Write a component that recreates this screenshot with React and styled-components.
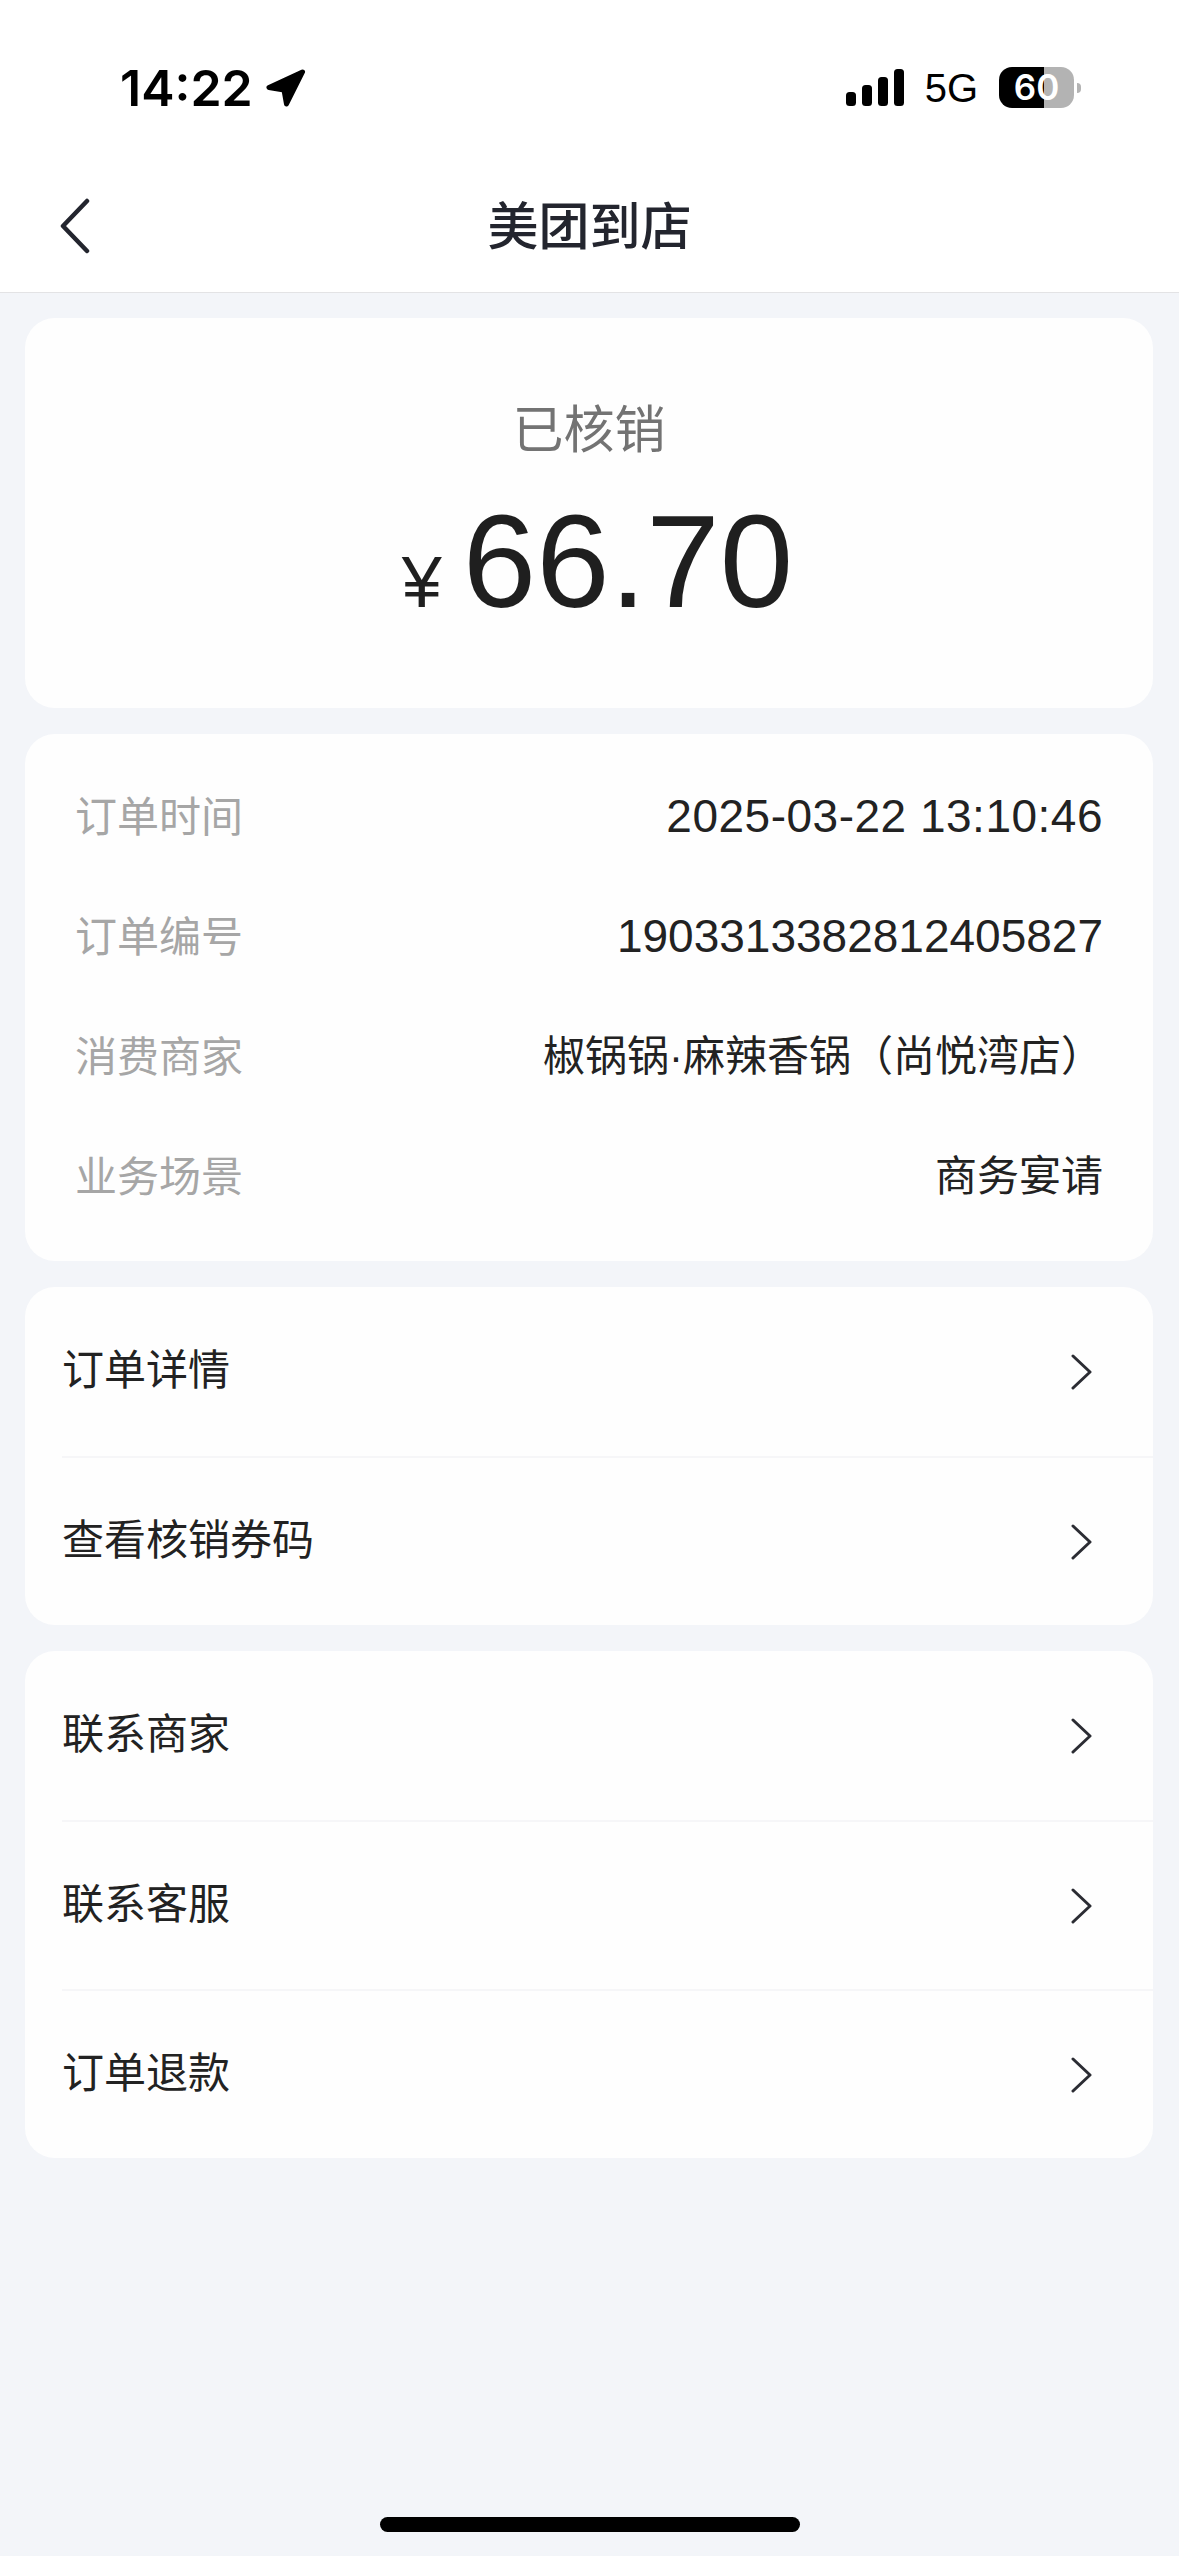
import React from 'react';
import styled, { createGlobalStyle } from 'styled-components';

const CJK = '"Noto Sans CJK SC", sans-serif';
const LATIN = '"Liberation Sans", "Noto Sans CJK SC", sans-serif';

const GlobalStyle = createGlobalStyle`
  html, body {
    margin: 0;
    padding: 0;
    background: #f3f5f9;
  }
  * {
    box-sizing: border-box;
  }
`;

const Page = styled.div`
  display: flex;
  flex-direction: column;
  width: 1179px;
  height: 2556px;
  overflow: hidden;
  background: #f3f5f9;
  font-family: ${CJK};
`;

const Header = styled.header`
  background: #fff;
  border-bottom: 1px solid #e3e3e5;
`;

const StatusBar = styled.div`
  display: flex;
  align-items: center;
  justify-content: space-between;
  height: 177px;
  padding: 0 105px 2px 120px;
`;

const StatusGroup = styled.div`
  display: flex;
  align-items: center;
  gap: ${props => props.$gap}px;
`;

const Clock = styled.span`
  font: 600 50px/1 Inter, ${LATIN};
  color: #000;
`;

const Network = styled.span`
  font: 400 40px/1 ${LATIN};
  color: #000;
`;

const Battery = styled.div`
  position: relative;
  display: flex;
  align-items: center;
  justify-content: center;
  width: 75px;
  height: 41px;
  border-radius: 13px;
  color: #fff;
  font: 600 35px/1 Inter, ${LATIN};

  &::after {
    content: '';
    position: absolute;
    top: 16px;
    right: -7px;
    width: 4px;
    height: 10px;
    border-radius: 0 5px 5px 0;
    background: #b3b3b3;
  }
`;

const NavBar = styled.nav`
  position: relative;
  display: flex;
  align-items: center;
  justify-content: center;
  height: 115px;
  padding-bottom: 22px;
`;

const BackButton = styled.svg`
  position: absolute;
  left: 59px;
  top: 21px;
`;

const Title = styled.h1`
  margin: 0;
  font: 500 51px/1.2 ${CJK};
  color: #23252e;
`;

const Content = styled.main`
  display: flex;
  flex-direction: column;
  gap: 26px;
  padding: 25px 26px 0 25px;
`;

const Card = styled.section`
  border-radius: 30px;
  background: #fefefe;
`;

const SummaryCard = styled(Card)`
  display: flex;
  flex-direction: column;
  align-items: center;
  height: 390px;
  padding-top: 74px;
`;

const Status = styled.div`
  font: 400 51px/68px ${CJK};
  color: #737373;
`;

const Amount = styled.div`
  display: flex;
  align-items: baseline;
  gap: 21px;
  margin: 32px 0 0 17px;
  color: #1f1f1f;
  font-family: ${LATIN};
`;

const Currency = styled.span`
  font-size: 72px;
  line-height: 1;
`;

const Price = styled.span`
  font-size: 132px;
  line-height: 140px;
`;

const InfoCard = styled(Card)`
  padding: 23px 50px 24px 50px;
`;

const InfoRow = styled.div`
  display: flex;
  align-items: center;
  justify-content: space-between;
  height: 120px;
`;

const InfoLabel = styled.span`
  padding-bottom: 6px;
  font: 400 42px/1.2 ${CJK};
  color: #a6a6a6;
`;

const InfoValue = styled.span`
  font-family: ${LATIN};
  font-size: ${props => (props.$numeric ? 46 : 42)}px;
  letter-spacing: ${props => props.$tracking || 0}px;
  line-height: 1.2;
  color: #222;
`;

const MenuRow = styled.div`
  display: flex;
  align-items: center;
  justify-content: space-between;
  height: 169px;
  margin-left: 37px;
  padding-right: 60px;
  border-top: ${props => (props.$first ? 'none' : '2px solid #f6f6f8')};
`;

const MenuLabel = styled.span`
  padding-bottom: 8px;
  font: 400 42px/1.2 ${CJK};
  color: #222;
`;

const HomeBar = styled.div`
  align-self: center;
  width: 420px;
  height: 15px;
  margin-top: auto;
  margin-bottom: 24px;
  border-radius: 8px;
  background: #000;
`;

const SignalIcon = () => (
  <svg width="58" height="37" viewBox="0 0 58 37" fill="#000">
    <rect x="0" y="23" width="10" height="14" rx="3.5" />
    <rect x="16" y="16" width="10" height="21" rx="3.5" />
    <rect x="32" y="8" width="10" height="29" rx="3.5" />
    <rect x="48" y="0" width="10" height="37" rx="3.5" />
  </svg>
);

const LocationIcon = () => (
  <svg width="40" height="38" viewBox="0 0 40 38" fill="#000" stroke="#000" strokeWidth="5" strokeLinejoin="round">
    <path d="M36.5 3 L3 18.5 L18 21 L20.5 35 Z" />
  </svg>
);

const Chevron = () => (
  <svg width="22" height="36" viewBox="0 0 22 36" fill="none">
    <path
      d="M2 2 L19 18 L2 34"
      stroke="#2b2c33"
      strokeWidth="3"
      strokeLinecap="round"
      strokeLinejoin="round"
    />
  </svg>
);

const infoRows = [
  { label: '订单时间', value: '2025-03-22 13:10:46', numeric: true, tracking: 0.5 },
  { label: '订单编号', value: '1903313382812405827', numeric: true },
  { label: '消费商家', value: '椒锅锅·麻辣香锅（尚悦湾店）' },
  { label: '业务场景', value: '商务宴请' },
];

const menuGroups = [
  ['订单详情', '查看核销券码'],
  ['联系商家', '联系客服', '订单退款'],
];

const batteryLevel = 60;

const App = () => (
  <Page>
    <GlobalStyle />
    <Header>
      <StatusBar>
        <StatusGroup $gap={13}>
          <Clock>14:22</Clock>
          <LocationIcon />
        </StatusGroup>
        <StatusGroup $gap={21}>
          <SignalIcon />
          <Network>5G</Network>
          <Battery
            style={{
              background: `linear-gradient(90deg, #000 ${batteryLevel}%, #b3b3b3 ${batteryLevel}%)`,
            }}
          >
            {batteryLevel}
          </Battery>
        </StatusGroup>
      </StatusBar>
      <NavBar>
        <BackButton width="32" height="56" viewBox="0 0 32 56" fill="none">
          <path
            d="M28 3 L4 28 L28 53"
            stroke="#23252e"
            strokeWidth="4.5"
            strokeLinecap="round"
            strokeLinejoin="round"
          />
        </BackButton>
        <Title>美团到店</Title>
      </NavBar>
    </Header>
    <Content>
      <SummaryCard>
        <Status>已核销</Status>
        <Amount>
          <Currency>¥</Currency>
          <Price>66.70</Price>
        </Amount>
      </SummaryCard>
      <InfoCard>
        {infoRows.map(row => (
          <InfoRow key={row.label}>
            <InfoLabel>{row.label}</InfoLabel>
            <InfoValue $numeric={row.numeric} $tracking={row.tracking}>{row.value}</InfoValue>
          </InfoRow>
        ))}
      </InfoCard>
      {menuGroups.map(group => (
        <Card key={group[0]}>
          {group.map((label, index) => (
            <MenuRow key={label} $first={index === 0}>
              <MenuLabel>{label}</MenuLabel>
              <Chevron />
            </MenuRow>
          ))}
        </Card>
      ))}
    </Content>
    <HomeBar />
  </Page>
);

export default App;
